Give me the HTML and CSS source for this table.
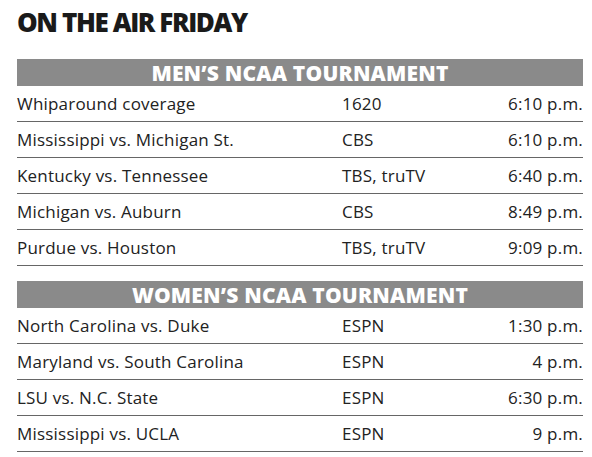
FILE: index.html
```html
<!DOCTYPE html>
<html>
<head>
<meta charset="utf-8">
<link rel="stylesheet" href="styles.css">
</head>
<body>
<div class="page">
  <h1 class="title">ON THE AIR FRIDAY</h1>
  <section class="block">
    <div class="bar">MEN’S NCAA TOURNAMENT</div>
    <div class="row"><span class="game">Whiparound coverage</span><span class="net">1620</span><span class="time">6:10 p.m.</span></div>
    <div class="row"><span class="game">Mississippi vs. Michigan St.</span><span class="net">CBS</span><span class="time">6:10 p.m.</span></div>
    <div class="row"><span class="game">Kentucky vs. Tennessee</span><span class="net">TBS, truTV</span><span class="time">6:40 p.m.</span></div>
    <div class="row"><span class="game">Michigan vs. Auburn</span><span class="net">CBS</span><span class="time">8:49 p.m.</span></div>
    <div class="row"><span class="game">Purdue vs. Houston</span><span class="net">TBS, truTV</span><span class="time">9:09 p.m.</span></div>
  </section>
  <section class="block">
    <div class="bar">WOMEN’S NCAA TOURNAMENT</div>
    <div class="row"><span class="game">North Carolina vs. Duke</span><span class="net">ESPN</span><span class="time">1:30 p.m.</span></div>
    <div class="row"><span class="game">Maryland vs. South Carolina</span><span class="net">ESPN</span><span class="time">4 p.m.</span></div>
    <div class="row"><span class="game">LSU vs. N.C. State</span><span class="net">ESPN</span><span class="time">6:30 p.m.</span></div>
    <div class="row"><span class="game">Mississippi vs. UCLA</span><span class="net">ESPN</span><span class="time">9 p.m.</span></div>
  </section>
</div>
</body>
</html>
```
FILE: styles.css
```css
html, body {
  margin: 0;
  padding: 0;
  background: #ffffff;
}
.page {
  width: 566px;
  padding: 7px 0 0 17px;
  font-family: "Open Sans", "Liberation Sans", sans-serif;
  color: #222222;
}
.title {
  margin: 0;
  font-family: "Open Sans", sans-serif;
  font-weight: 800;
  font-size: 26px;
  line-height: 30px;
  letter-spacing: -1.4px;
  color: #1a1a1a;
}
.block {
  margin-top: 22px;
}
.block + .block {
  margin-top: 15px;
}
.bar {
  background: #8a8a8a;
  color: #ffffff;
  height: 27px;
  line-height: 28px;
  text-align: center;
  font-weight: 800;
  font-size: 21px;
  letter-spacing: 0.2px;
}
.row {
  display: grid;
  grid-template-columns: 325px 1fr 120px;
  height: 35px;
  align-items: center;
  border-bottom: 1px solid #666666;
  font-size: 17px;
  letter-spacing: 0.2px;
}
.time {
  text-align: right;
}
```
